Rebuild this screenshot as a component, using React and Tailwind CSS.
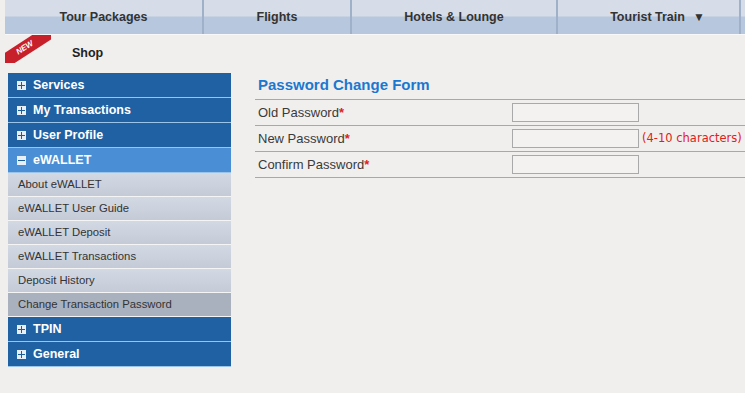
import React from 'react';

const tabs = [
	{ label: 'Tour Packages', w: 'w-[199px]' },
	{ label: 'Flights', w: 'w-[148px]' },
	{ label: 'Hotels & Lounge', w: 'w-[206px]' },
	{ label: 'Tourist Train', w: 'w-[183px] pl-[18px]', arrow: true },
];

const subItems = [
	'About eWALLET',
	'eWALLET User Guide',
	'eWALLET Deposit',
	'eWALLET Transactions',
	'Deposit History',
	'Change Transaction Password',
];

const PlusBox = ({ minus }) => (
	<span className="relative inline-block w-[9px] h-[9px] bg-[#e8eef6] mr-[7px] shrink-0">
		<span className="absolute left-[1px] right-[1px] top-[4px] h-[1px] bg-[#1d5c9a]" />
		{!minus && <span className="absolute top-[1px] bottom-[1px] left-[4px] w-[1px] bg-[#1d5c9a]" />}
	</span>
);

const MenuHead = ({ label, active, minus }) => (
	<div
		className={`flex items-center h-[25px] pl-[9px] text-[12.5px] font-bold text-white border-b border-[#9cc4e8] ${
			active ? 'bg-[#4a8fd6]' : 'bg-[#1f61a3]'
		}`}
	>
		<PlusBox minus={minus} />
		{label}
	</div>
);

const FormRow = ({ label, hint }) => (
	<div className="flex items-center h-[26px] border-b border-[#a8a8a8]">
		<span className="w-[257px] pl-[3px] text-[13px] text-[#3a3a3a]">
			{label}
			<span className="text-[#d22] font-bold">*</span>
		</span>
		<input className="w-[127px] h-[19px] border border-[#a9a9a9] bg-[#f4f2f0]" type="password" />
		{hint && (
			<span className="ml-[3px] text-[11.5px] text-[#e02020] font-['DejaVu_Sans',sans-serif] whitespace-nowrap">
				{hint}
			</span>
		)}
	</div>
);

const App = () => {
	return (
		<div className="w-[745px] h-[393px] overflow-hidden bg-[#f1efed] font-['Liberation_Sans',Arial,sans-serif] relative">
			<div className="flex ml-[5px] h-[35px] border-b border-[#f8f8f8] bg-[linear-gradient(#d6dde9_0%,#d6dde9_47%,#b7c7dd_50%,#b7c7dd_100%)]">
				{tabs.map((t) => (
					<div
						key={t.label}
						className={`${t.w} flex items-center justify-center border-r-2 border-[#9fb1c9] text-[12.5px] font-bold text-[#333]`}
					>
						{t.label}
						{t.arrow && <span className="ml-[8px] text-[12px]">▼</span>}
					</div>
				))}
			</div>

			<div className="absolute left-[5px] top-[35px] w-[46px] h-[28px] overflow-hidden">
				<div className="absolute left-[-12px] top-[6px] w-[64px] h-[14px] bg-[#c8202a] -rotate-[33deg] origin-center flex items-center justify-center">
					<span className="text-[8px] font-bold text-white italic">NEW</span>
				</div>
			</div>

			<div className="h-[38px] flex items-center pl-[72px] pb-[2px] text-[12.5px] font-bold text-[#222]">Shop</div>

			<div className="flex">
				<div className="ml-[8px] w-[223px]">
					<MenuHead label="Services" />
					<MenuHead label="My Transactions" />
					<MenuHead label="User Profile" />
					<MenuHead label="eWALLET" active minus />
					{subItems.map((s, i) => (
						<div
							key={s}
							className={`h-[24px] flex items-center pl-[10px] text-[11.3px] text-[#333] border-b border-[#f4f4f4] ${
								i === subItems.length - 1
									? 'bg-[#a9b1bf]'
									: 'bg-[linear-gradient(#d3d9e3,#c4cbd8)]'
							}`}
						>
							{s}
						</div>
					))}
					<MenuHead label="TPIN" />
					<MenuHead label="General" />
				</div>

				<div className="ml-[24px] flex-1">
					<div className="h-[27px] flex items-end pb-[3px] pl-[3px] text-[15px] font-bold text-[#1b78d0] border-b border-[#a8a8a8]">
						Password Change Form
					</div>
					<FormRow label="Old Password" />
					<FormRow label="New Password" hint="(4-10 characters)" />
					<FormRow label="Confirm Password" />
				</div>
			</div>
		</div>
	);
};

export default App;
